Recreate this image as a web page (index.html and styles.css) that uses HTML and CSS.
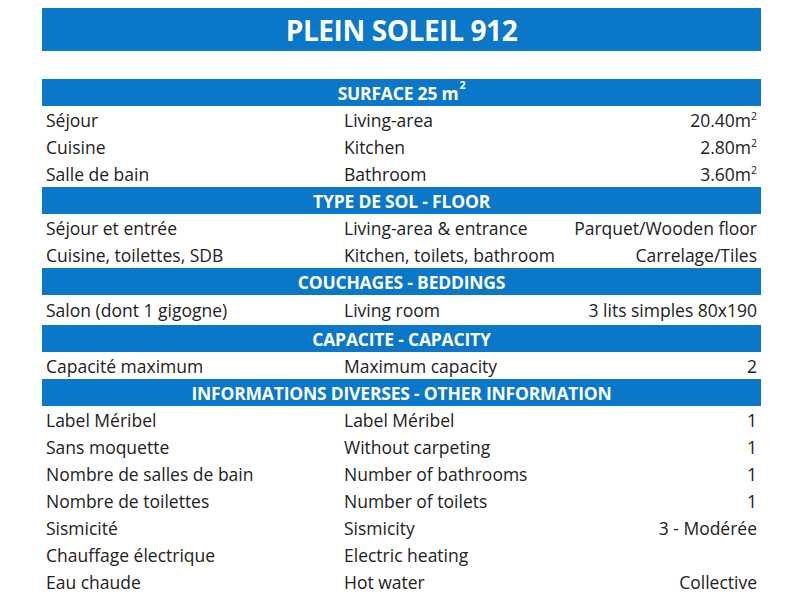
FILE: index.html
```html
<!DOCTYPE html>
<html lang="fr">
<head>
<meta charset="utf-8">
<title>Plein Soleil 912</title>
<link rel="stylesheet" href="styles.css">
</head>
<body>
<div class="sheet">
  <h1 class="title">PLEIN SOLEIL 912</h1>
  <div class="table">
    <div class="head">SURFACE 25 m<sup class="hsup">2</sup></div>
    <div class="row"><span>Séjour</span><span>Living-area</span><span class="val">20.40m<sup>2</sup></span></div>
    <div class="row"><span>Cuisine</span><span>Kitchen</span><span class="val">2.80m<sup>2</sup></span></div>
    <div class="row"><span>Salle de bain</span><span>Bathroom</span><span class="val">3.60m<sup>2</sup></span></div>
    <div class="head">TYPE DE SOL - FLOOR</div>
    <div class="row"><span>Séjour et entrée</span><span>Living-area &amp; entrance</span><span class="val">Parquet/Wooden floor</span></div>
    <div class="row"><span>Cuisine, toilettes, SDB</span><span>Kitchen, toilets, bathroom</span><span class="val">Carrelage/Tiles</span></div>
    <div class="head">COUCHAGES - BEDDINGS</div>
    <div class="row tall"><span>Salon (dont 1 gigogne)</span><span>Living room</span><span class="val">3 lits simples 80x190</span></div>
    <div class="head">CAPACITE - CAPACITY</div>
    <div class="row"><span>Capacité maximum</span><span>Maximum capacity</span><span class="val">2</span></div>
    <div class="head">INFORMATIONS DIVERSES - OTHER INFORMATION</div>
    <div class="row"><span>Label Méribel</span><span>Label Méribel</span><span class="val">1</span></div>
    <div class="row"><span>Sans moquette</span><span>Without carpeting</span><span class="val">1</span></div>
    <div class="row"><span>Nombre de salles de bain</span><span>Number of bathrooms</span><span class="val">1</span></div>
    <div class="row"><span>Nombre de toilettes</span><span>Number of toilets</span><span class="val">1</span></div>
    <div class="row"><span>Sismicité</span><span>Sismicity</span><span class="val">3 - Modérée</span></div>
    <div class="row"><span>Chauffage électrique</span><span>Electric heating</span><span class="val"></span></div>
    <div class="row"><span>Eau chaude</span><span>Hot water</span><span class="val">Collective</span></div>
  </div>
</div>
</body>
</html>
```
FILE: styles.css
```css
html, body {
  margin: 0;
  padding: 0;
  background: #ffffff;
}
body {
  font-family: "Open Sans", "Noto Sans", sans-serif;
  color: #222222;
}
.sheet {
  width: 719px;
  margin-left: 42px;
  padding-top: 8px;
}
.title {
  margin: 0;
  height: 43px;
  background: #0a77c9;
  color: #ffffff;
  font-size: 28px;
  font-weight: 700;
  display: flex;
  align-items: center;
  justify-content: center;
  letter-spacing: -0.4px;
}
.table {
  margin-top: 28px;
  display: flex;
  flex-direction: column;
}
.head {
  height: 27px;
  background: #0a77c9;
  color: #ffffff;
  font-size: 17.5px;
  font-weight: 700;
  display: flex;
  align-items: center;
  justify-content: center;
  letter-spacing: -0.2px;
}
.row {
  height: 27px;
  display: grid;
  grid-template-columns: 298px 232px 1fr;
  align-items: center;
  font-size: 17.5px;
}
.row.tall {
  height: 30px;
}
.row span {
  padding-left: 4px;
  white-space: nowrap;
}
.row .val {
  text-align: right;
  padding-left: 0;
  padding-right: 4px;
}
sup {
  font-size: 0.6em;
  line-height: 0;
  vertical-align: 0.7em;
}
.hsup {
  display: inline-block;
  line-height: 1;
  transform: translateY(-7px);
  margin-left: 1px;
}
```
